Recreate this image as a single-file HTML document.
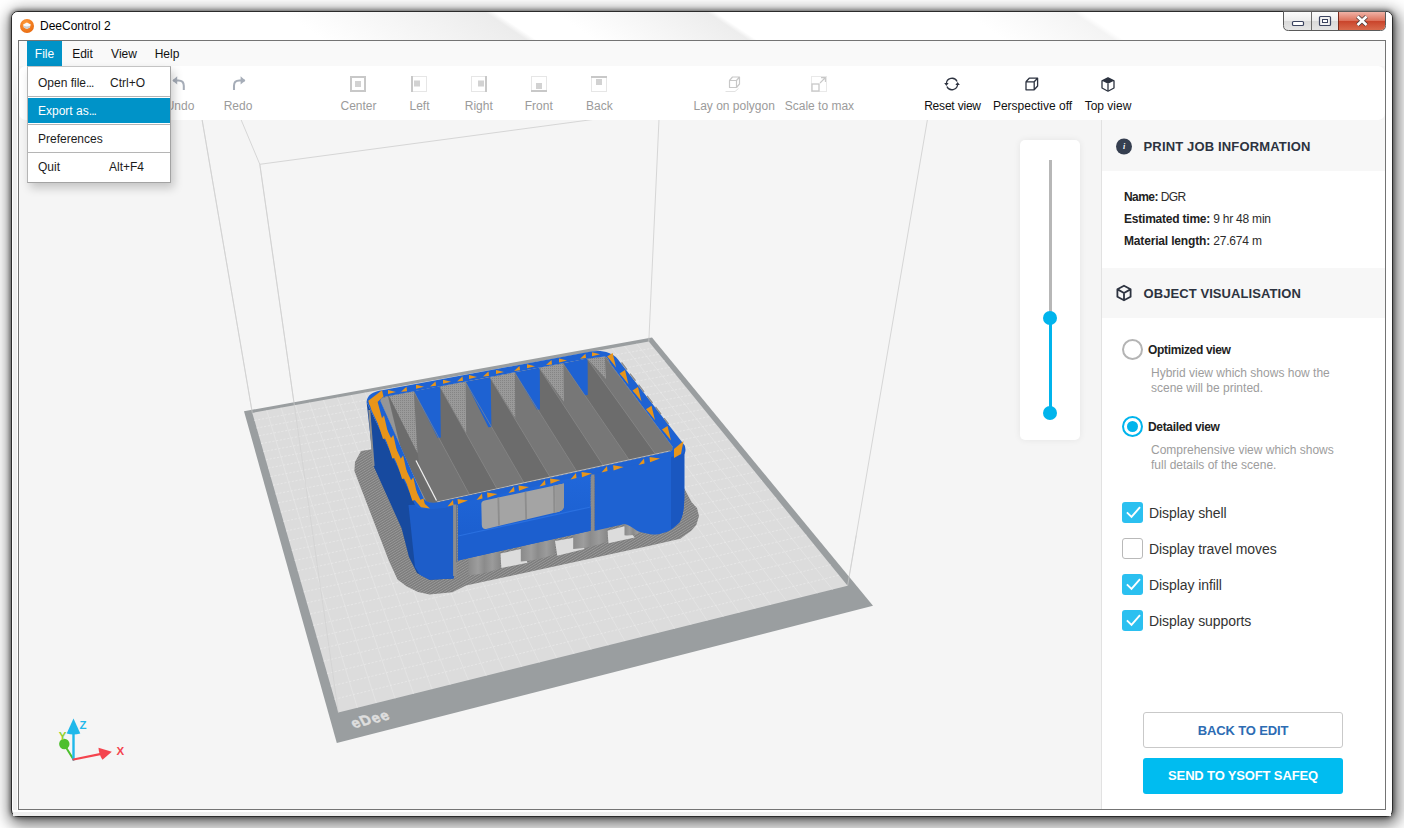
<!DOCTYPE html>
<html lang="en">
<head>
<meta charset="utf-8">
<title>DeeControl 2</title>
<style>
*{box-sizing:border-box;margin:0;padding:0}
html,body{width:1404px;height:828px;overflow:hidden;background:#fff}
body{position:relative;font-family:"Liberation Sans",sans-serif;color:#222;font-size:12px}
.abs{position:absolute}
#win{position:absolute;left:11px;top:11px;width:1382px;height:806px;border:1px solid #2b2b2b;border-radius:7px;background:#fff;
 box-shadow:0 0 0 1px rgba(255,255,255,.6) inset,2px 4px 15px 4px rgba(0,0,0,.55),0 0 4px 1px rgba(0,0,0,.45)}
#glass{position:absolute;left:12px;top:12px;width:1380px;height:28px;border-radius:6px 6px 0 0;
 background:linear-gradient(33.700deg,#fff 0,#fff 21.900%,#ececec 36.200%,#fff 36.900%,#fff 41%,#ededed 51.800%,#fff 52.400%,#fff 69.800%,#f4f4f4 77.500%,#fff 78.200%,#fff 100%)}
#title{position:absolute;left:40px;top:18.500px;font-size:12px;line-height:15px;color:#000;white-space:nowrap}
#client{position:absolute;left:18px;top:40px;width:1368px;height:770px;border:1px solid #747474;background:#f5f5f5;overflow:hidden}
/* everything inside #client uses page coords minus (19,41) via this wrapper */
#page{position:absolute;left:-19px;top:-41px;width:1404px;height:828px}
#menubar{position:absolute;left:19px;top:41px;width:1366px;height:25px;background:#f9f9f9}
.mi{position:absolute;top:41px;height:25px;line-height:26.500px;font-size:12px;color:#111;text-align:center;white-space:nowrap}
#toolbar{position:absolute;left:19px;top:66px;width:1366px;height:54px;background:#fff;border-radius:7px}
.tl{position:absolute;top:99px;height:15px;line-height:15px;font-size:12px;color:#9b9b9b;white-space:nowrap;transform:translateX(-50%)}
.tl.on{color:#111}
.ti{position:absolute;overflow:visible;margin-top:1px}
#drop{position:absolute;left:27px;top:66px;width:144px;height:117px;background:#fff;border:1px solid #a3a3a3;border-top-color:#c4c4c4;border-left-color:#b5b5b5;box-shadow:3px 5px 9px rgba(0,0,0,.2)}
.di{position:absolute;left:0;width:142px;height:26px;line-height:26px;font-size:12px;color:#1c1c1c;white-space:nowrap}
.di span{position:absolute;top:0}
.ds{position:absolute;left:0;width:142px;height:1px;background:#b5b5b5}
#panel{position:absolute;left:1101px;top:120px;width:284px;height:690px;background:#fff;border-left:1px solid #e2e2e2}
.hd{position:absolute;left:1102px;width:283px;background:#f7f7f7}
.hd b{position:absolute;left:41.500px;font-size:13px;line-height:18px;color:#2d3340;white-space:nowrap;letter-spacing:.08px}
.info{position:absolute;left:1124px;font-size:12px;line-height:15px;color:#2c2c2c;white-space:nowrap}
.info b{color:#222}
.rl{position:absolute;left:1148px;letter-spacing:-.34px;font-size:12px;font-weight:bold;line-height:15px;color:#222;white-space:nowrap}
.rd{position:absolute;left:1151px;font-size:12px;line-height:15px;color:#9d9d9d;white-space:nowrap}
.cb{position:absolute;left:1122px;width:21px;height:21px;border-radius:3px;background:#2bc0f0}
.cb.off{background:#fff;border:1px solid #b9b9b9}
.cl{position:absolute;left:1149px;letter-spacing:-.08px;font-size:14px;line-height:18px;color:#333;white-space:nowrap}
.btn{position:absolute;left:1143px;width:200px;height:36px;border-radius:3px;letter-spacing:-.15px;font-size:13px;font-weight:bold;text-align:center;line-height:36px;white-space:nowrap}
</style>
</head>
<body>
<div id="win"></div>
<div id="glass"></div>
<div class="abs" style="left:13px;top:40px;width:4px;height:770px;background:linear-gradient(#fff,#efefef 8%,#efefef 100%)"></div>
<div class="abs" style="left:13px;top:811.500px;width:1378px;height:4px;background:linear-gradient(to right,#efefef 0,#f1f1f1 55%,#fff 78%)"></div>
<!-- title bar -->
<svg class="abs" style="left:19px;top:18px" width="16" height="16" viewBox="0 0 16 16">
 <defs><radialGradient id="og" cx="40%" cy="30%" r="75%"><stop offset="0" stop-color="#ff9a3a"/><stop offset="1" stop-color="#e86a10"/></radialGradient></defs>
 <circle cx="8" cy="8" r="7" fill="url(#og)"/>
 <path d="M4.100 6.600 L7.900 4.600 L11.800 6.600 L10.700 9.600 L7.900 10.900 L4.850 9.600 Z" fill="#fbfaf9"/>
 <path d="M4.500 7.800 L7.900 8.600 L11.400 7.800 L10.700 9.600 L7.900 10.900 L4.850 9.600 Z" fill="#c9cdd2"/>
</svg>
<div id="title">DeeControl 2</div>
<!-- caption buttons -->
<svg class="abs" style="left:1282px;top:11px" width="105" height="21" viewBox="0 0 105 21">
 <defs>
  <linearGradient id="cbg" x1="0" y1="0" x2="0" y2="1"><stop offset="0" stop-color="#fdfdfd"/><stop offset=".5" stop-color="#ececec"/><stop offset=".5" stop-color="#d9d9d9"/><stop offset="1" stop-color="#e6e6e6"/></linearGradient>
  <linearGradient id="crd" x1="0" y1="0" x2="0" y2="1"><stop offset="0" stop-color="#f0b2a6"/><stop offset=".5" stop-color="#dc6f58"/><stop offset=".5" stop-color="#c9432a"/><stop offset="1" stop-color="#d96a4c"/></linearGradient>
 </defs>
 <path d="M1.5 0.5 H103.5 V14.5 Q103.5 19.5 98.5 19.5 H6.5 Q1.5 19.5 1.5 14.5 Z" fill="url(#cbg)" stroke="#5a5a5a" stroke-width="1"/>
 <path d="M56.5 1 H103 V14.5 Q103 19 98.5 19 H56.5 Z" fill="url(#crd)"/>
 <path d="M29.5 1 V19 M56.5 1 V19" stroke="#6b6b6b" stroke-width="1"/>
 <path d="M56.5 1 V19" stroke="#7a2a1c" stroke-width="1"/>
 <rect x="10.5" y="10.5" width="11" height="4" rx="1" fill="#fff" stroke="#3c4460" stroke-width="1.2"/>
 <rect x="37.5" y="5.500" width="11" height="9" rx="1" fill="#f2f2f2" stroke="#3c4460" stroke-width="1.2"/>
 <rect x="40.5" y="8.500" width="5" height="3" fill="#fff" stroke="#3c4460" stroke-width="1"/>
 <path d="M75.5 5.500 L84.500 14 M84.500 5.500 L75.500 14" stroke="#4a3a3a" stroke-width="4.2" stroke-linecap="butt"/>
 <path d="M75.5 5.500 L84.500 14 M84.500 5.500 L75.500 14" stroke="#fff" stroke-width="2.600" stroke-linecap="butt"/>
</svg>

<div id="client"><div id="page">
<div id="viewport" class="abs" style="left:19px;top:119px;width:1082px;height:691px;background:#f5f5f5;overflow:hidden">
<!--SCENE--><svg class="abs" style="left:0;top:0" width="1082" height="691" viewBox="19 119 1082 691">
<path d="M252.3 412.9 L198.7 100.0 M338.4 712.5 L259.8 164.3 M259.8 164.3 L232.8 100.0 M259.8 164.3 L737.7 100.0 M648.8 341.6 L659.9 100.0 M847.6 585.7 L930.8 100.0 " fill="none" stroke="#d6d6d6" stroke-width="1"/>
<polygon points="244.0,411.2 652.0,337.5 873.0,605.8 336.8,743.1" fill="#9a9ea0"/>
<polygon points="252.3,412.9 648.8,341.6 847.6,585.7 338.4,712.5" fill="#dcdcdc"/>
<path d="M266.7 410.3 L357.4 707.8 M281.0 407.7 L376.3 703.1 M295.3 405.2 L395.0 698.4 M309.4 402.6 L413.6 693.8 M323.5 400.1 L432.0 689.2 M337.4 397.6 L450.2 684.6 M351.3 395.1 L468.4 680.1 M365.1 392.6 L486.3 675.7 M378.8 390.1 L504.1 671.2 M392.5 387.7 L521.8 666.8 M406.0 385.3 L539.3 662.5 M419.5 382.8 L556.7 658.1 M432.9 380.4 L574.0 653.8 M446.2 378.0 L591.1 649.6 M459.4 375.7 L608.1 645.3 M472.6 373.3 L624.9 641.1 M485.6 370.9 L641.6 637.0 M498.6 368.6 L658.2 632.9 M511.5 366.3 L674.7 628.8 M524.4 364.0 L691.0 624.7 M537.2 361.7 L707.2 620.7 M549.8 359.4 L723.3 616.7 M562.5 357.1 L739.2 612.7 M575.0 354.9 L755.1 608.7 M587.5 352.6 L770.8 604.8 M599.9 350.4 L786.4 600.9 M612.2 348.2 L801.9 597.1 M624.5 346.0 L817.2 593.3 M636.7 343.8 L832.5 589.5 " fill="none" stroke="#e8e8e8" stroke-width="0.75" stroke-opacity=".85"/>
<path d="M254.4 420.4 L653.9 347.9 M256.6 428.0 L659.1 354.2 M258.9 435.7 L664.4 360.7 M261.1 443.6 L669.7 367.3 M263.4 451.6 L675.2 374.0 M265.8 459.8 L680.7 380.8 M268.2 468.1 L686.3 387.7 M270.6 476.6 L692.0 394.7 M273.1 485.2 L697.8 401.8 M275.6 494.0 L703.8 409.1 M278.2 502.9 L709.8 416.5 M280.8 512.1 L715.9 424.0 M283.5 521.4 L722.1 431.6 M286.2 530.9 L728.5 439.4 M289.0 540.5 L734.9 447.3 M291.8 550.4 L741.5 455.4 M294.7 560.5 L748.2 463.6 M297.7 570.7 L755.0 472.0 M300.7 581.2 L761.9 480.5 M303.7 591.9 L769.0 489.2 M306.9 602.8 L776.2 498.0 M310.1 614.0 L783.5 507.0 M313.4 625.4 L791.0 516.2 M316.7 637.0 L798.6 525.5 M320.1 648.9 L806.4 535.1 M323.6 661.1 L814.3 544.8 M327.2 673.5 L822.4 554.7 M330.8 686.2 L830.6 564.8 M334.6 699.2 L839.0 575.2 " fill="none" stroke="#eaeaea" stroke-width="0.8" stroke-opacity=".9" stroke-dasharray="2.200 1.600"/>
<path d="M338.4 712.5 L259.8 164.3 M252.3 412.9 L202 119 M847.6 585.7 L856.2 535.5 M648.8 341.6 L649 337" fill="none" stroke="#cfcfcf" stroke-width="0.8" opacity=".8"/>
<text transform="translate(354,728.300) rotate(-14.500) skewX(14)" font-family="Liberation Sans,sans-serif" font-weight="bold" font-size="14.500" fill="#dedede" stroke="#dedede" stroke-width=".5" letter-spacing="1">eDee</text>
<defs>
<pattern id="raft" width="2.200" height="2.200" patternUnits="userSpaceOnUse" patternTransform="rotate(-32)"><rect width="2.200" height="2.200" fill="#7b7b7b"/><rect width="2.200" height=".9" fill="#999"/></pattern>
<pattern id="ltx" width="2" height="2" patternUnits="userSpaceOnUse"><rect width="2" height="2" fill="#9a9a9a"/><rect width="1" height="1" fill="#858585"/></pattern>
<linearGradient id="pil" x1="0" y1="0" x2="1" y2="0"><stop offset="0" stop-color="#8a8a8a"/><stop offset=".3" stop-color="#9d9d9d"/><stop offset=".5" stop-color="#8b8b8b"/><stop offset=".75" stop-color="#9b9b9b"/><stop offset="1" stop-color="#888"/></linearGradient>
<linearGradient id="fw" x1="0" y1="0" x2="0" y2="1"><stop offset="0" stop-color="#2067da"/><stop offset="1" stop-color="#1a5ccb"/></linearGradient>
<clipPath id="inr"><path d="M380.400 401 C380.600 398 384 396.800 388.800 396 L587 358.700 L604.800 356.500 C607 357.500 608.500 359 609.900 362.900 L672.400 446.600 C673 449 672 451 669.900 451.600 L438 502.300 C433 503.300 427 503 424 499 Z"/></clipPath>
</defs>
<polygon points="374.0,449.0 361.0,451.0 355.0,462.0 354.4,471.0 360.5,487.0 389.0,561.0 397.5,579.6 406.8,586.6 418.0,592.0 429.6,594.6 452.4,592.3 466.0,585.5 650.7,545.6 680.3,538.7 691.0,531.0 696.3,525.0 699.0,516.0 697.0,508.0 691.7,502.3 684.0,488.0 684.0,470.0 600.0,470.0 420.0,500.0" fill="url(#raft)"/>
<polygon points="500.3,553.6 520.8,549.0 527.6,562.7 501.4,568.0" fill="#dcdcdc"/>
<polygon points="555.0,541.0 575.5,537.6 584.6,549.0 557.3,555.8" fill="#dcdcdc"/>
<polygon points="607.4,530.8 624.5,526.2 634.8,537.6 608.5,543.3" fill="#dcdcdc"/>
<path d="M468.4 555 L500.3 548.0 L500.3 568.0 Q484.4 574.5 468.4 575 Z" fill="url(#pil)"/>
<path d="M520.8 542 L555 534.5 L555 554.0 Q537.9 560.7 520.8 561.5 Z" fill="url(#pil)"/>
<path d="M573.2 532 L607.4 524.5 L607.4 541.5 Q590.3 548.2 573.2 549 Z" fill="url(#pil)"/>
<path d="M624.5 523 L641.6 519.2 L641.6 531.5 Q633.0 536.4 624.5 535.3 Z" fill="url(#pil)"/>
<polygon points="374.5,467.0 377.5,465.5 392.0,505.0 404.0,535.0 414.0,565.0 409.0,557.0 401.6,528.3 394.0,510.0" fill="#7b7b7b"/>
<polygon points="366.6,402.0 370.8,440.0 373.9,466.7 401.6,528.3 409.0,557.0 417.0,573.0 429.6,579.8 453.6,578.6 453.6,503.0 431.0,504.0 412.7,497.0" fill="#174a9f"/>
<path d="M369.300 410 L373.600 466" stroke="#8e8e8e" stroke-width="2" fill="none"/>
<polygon points="408.5,505.0 453.6,503.0 453.6,578.6 429.6,579.8 420.0,575.0 415.0,567.0" fill="#1d5dc9"/>
<g clip-path="url(#inr)">
<rect x="370" y="340" width="320" height="180" fill="#727272"/>
<polygon points="413.8,391.5 439.7,386.5 497.5,489.8 470.1,495.8" fill="#6c6c6c"/>
<polygon points="439.7,386.5 465.6,382.2 524.6,483.8 497.5,489.8" fill="#777"/>
<polygon points="465.6,382.2 490.1,377.8 550.6,478.0 524.6,483.8" fill="#6c6c6c"/>
<polygon points="490.1,377.8 514.9,373.0 577.2,472.1 550.6,478.0" fill="#777"/>
<polygon points="514.9,373.0 539.2,368.0 603.7,466.2 577.2,472.1" fill="#6c6c6c"/>
<polygon points="539.2,368.0 563.4,364.0 629.6,460.5 603.7,466.2" fill="#777"/>
<polygon points="563.4,364.0 587.0,358.7 655.9,454.7 629.6,460.5" fill="#6c6c6c"/>
<polygon points="587.0,358.7 604.8,357.0 675.2,450.4 655.9,454.7" fill="#777"/>
<polygon points="604.8,357.0 609.9,362.9 672.4,446.6 669.9,451.6 675.2,450.4" fill="#7a7a7a"/>
<polygon points="388.8,396.0 413.8,391.5 470.1,495.8 437.0,503.0" fill="#747474"/>
<polygon points="388.8,396.0 417.5,453.0 421.0,475.0 437.0,503.0 428.0,505.0 401.0,450.0" fill="#6c6c6c"/>
<polygon points="375.0,400.0 388.0,396.5 401.0,450.0 428.0,505.0 412.0,505.0" fill="#969696"/>
<polygon points="413.8,391.0 440.3,386.0 440.8,437.6 437.8,437.9" fill="#1e62d2"/>
<polygon points="465.6,381.7 490.7,377.3 491.4,427.0 488.4,427.3" fill="#1e62d2"/>
<polygon points="514.9,372.5 539.8,367.5 540.0,409.4 537.0,409.7" fill="#1e62d2"/>
<polygon points="563.4,363.5 587.6,358.2 587.8,395.0 584.8,395.3" fill="#1e62d2"/>
<polygon points="388.8,395.5 413.8,391.0 417.5,453.0" fill="url(#ltx)"/>
<polygon points="439.7,386.0 465.6,381.7 466.2,433.0" fill="url(#ltx)"/>
<polygon points="490.1,377.3 514.9,372.5 515.2,418.0" fill="url(#ltx)"/>
<polygon points="539.2,367.5 563.4,363.5 563.9,401.8" fill="url(#ltx)"/>
<polygon points="587.0,358.2 604.8,356.5 606.0,379.0" fill="url(#ltx)"/>
<path d="M413.8 391.5 L470.1 495.8 M439.7 386.5 L497.5 489.8 M465.6 382.2 L524.6 483.8 M490.1 377.8 L550.6 478.0 M514.9 373.0 L577.2 472.1 M539.2 368.0 L603.7 466.2 M563.4 364.0 L629.6 460.5 M587.0 358.7 L655.9 454.7 M604.8 357.0 L675.2 450.4 " stroke="#8e8e8e" stroke-width=".6" fill="none"/>
<path d="M416 460.500 L436.500 500.600" stroke="#f2f2f2" stroke-width="1.200"/>
<path d="M437 502 L669.900 451" stroke="#b9b9b9" stroke-width="1.200"/>
</g>
<path d="M366.600 402 C367 395 373 391.500 382 390.200 L591.300 351.600 C601 350 612 352 618 359.500 L684.300 445 C686.500 449 686 455 680 457.500 L448.800 507.200 C440 509 425 510 418 508 C415 506 413.500 502 412.700 499 Z M380.400 401 C380.600 398 384 396.800 388.800 396 L587 358.700 L604.800 356.500 C607 357.500 608.500 359 609.900 362.900 L672.400 446.600 C673 449 672 451 669.900 451.600 L438 502.300 C433 503.300 427 503 424 499 Z" fill="#1e62d2" fill-rule="evenodd"/>
<path d="M621.500 362.500 L668.500 424" stroke="#8d8d8d" stroke-width="1.400" fill="none" stroke-dasharray="9 5"/>
<polygon points="458.0,503.5 590.6,474.0 590.6,530.8 458.0,560.4" fill="url(#fw)"/>
<polygon points="458.0,536.0 590.6,507.0 590.6,530.8 458.0,560.4" fill="#1c5fcf"/>
<path d="M458 536 L590.600 507" stroke="#2a70e0" stroke-width="1.200" fill="none"/>
<path d="M484.500 500.500 L564 483.600 L564 505 Q564 510.500 559 511.800 L487 528.800 Q482 529.800 481.800 525 L481.300 504 Q481.300 501 484.500 500.500 Z" fill="#a4a4a4"/>
<path d="M498.300 497.500 L499 525.500 M525.500 491.800 L526.200 519.500 M553.900 485.800 L554.400 513" stroke="#8d8d8d" stroke-width="1.800" fill="none"/>
<path d="M555 485.500 L564 483.600 L564 505 Q564 510.500 559 511.800 L555.500 512.600 Z" fill="#999"/>
<path d="M454.800 504.500 V576" stroke="#8d8d8d" stroke-width="3.400"/><path d="M456.700 504.500 V562" stroke="#5d6f92" stroke-width="1"/>
<path d="M592.800 474.500 V531" stroke="#8d8d8d" stroke-width="3.200"/><path d="M594.600 474.500 V531" stroke="#5d6f92" stroke-width=".8"/>
<path d="M595 473.500 L672 456.500 L680 455 C685 453 686 450 684.300 445 L684.300 497.800 C684 512 682 518 679.200 522.800 C674 528 670 531 666.700 531.900 C660 534 655 535 650.700 534.200 C645 533.500 641 532.500 637 530.800 C632 527 628 524.500 624.500 524 L595 530.800 Z" fill="#1e62d2"/>
<path d="M671 457 L680 455 C685 453 686 450 684.300 445 L684.300 497.800 C684 512 682 518 679.200 522.800 L671 529 Z" fill="#1a57c0"/>
<polygon points="388.0,390.0 396.0,392.0 388.0,394.0" fill="#e8951a"/>
<polygon points="401.0,391.8 406.5,386.8 407.0,391.2" fill="#e8951a"/>
<polygon points="416.0,384.8 424.0,386.8 416.0,388.8" fill="#e8951a"/>
<polygon points="430.0,386.4 435.5,381.4 436.0,385.8" fill="#e8951a"/>
<polygon points="443.0,379.8 451.0,381.8 443.0,383.8" fill="#e8951a"/>
<polygon points="457.0,381.4 462.5,376.4 463.0,380.8" fill="#e8951a"/>
<polygon points="469.0,375.0 477.0,377.0 469.0,379.0" fill="#e8951a"/>
<polygon points="483.0,376.6 488.5,371.6 489.0,376.0" fill="#e8951a"/>
<polygon points="496.0,370.0 504.0,372.0 496.0,374.0" fill="#e8951a"/>
<polygon points="514.0,370.9 519.5,365.9 520.0,370.3" fill="#e8951a"/>
<polygon points="527.0,364.3 535.0,366.3 527.0,368.3" fill="#e8951a"/>
<polygon points="546.0,365.0 551.5,360.0 552.0,364.4" fill="#e8951a"/>
<polygon points="559.0,358.4 567.0,360.4 559.0,362.4" fill="#e8951a"/>
<polygon points="580.0,358.7 585.5,353.7 586.0,358.1" fill="#e8951a"/>
<polygon points="592.0,352.3 600.0,354.3 592.0,356.3" fill="#e8951a"/>
<polygon points="607.1,356.5 612.6,353.0 616.1,367.5 610.6,360.5" fill="#e8951a"/>
<polygon points="619.5,373.5 625.0,370.0 628.5,384.5 623.0,377.5" fill="#e8951a"/>
<polygon points="632.5,390.5 638.0,387.0 641.5,401.5 636.0,394.5" fill="#e8951a"/>
<polygon points="646.0,409.3 651.5,405.8 655.0,420.3 649.5,413.3" fill="#e8951a"/>
<polygon points="662.0,429.5 667.5,426.0 671.0,440.5 665.5,433.5" fill="#e8951a"/>
<polygon points="674.0,449.0 683.5,441.0 681.0,454.0 674.0,458.0" fill="#e8951a"/>
<polygon points="601.5,472.4 607.0,465.9 607.5,471.1" fill="#e8951a"/>
<polygon points="613.1,465.3 623.6,467.0 613.6,470.6" fill="#e8951a"/>
<polygon points="638.5,464.9 644.0,458.4 644.5,463.6" fill="#e8951a"/>
<polygon points="649.5,456.9 660.0,458.6 650.0,462.2" fill="#e8951a"/>
<polygon points="570.5,479.4 576.0,472.9 576.5,478.1" fill="#e8951a"/>
<polygon points="581.5,471.9 592.0,473.6 582.0,477.2" fill="#e8951a"/>
<polygon points="539.5,486.4 545.0,479.9 545.5,485.1" fill="#e8951a"/>
<polygon points="550.0,478.4 560.5,480.1 550.5,483.7" fill="#e8951a"/>
<polygon points="508.5,492.9 514.0,486.4 514.5,491.6" fill="#e8951a"/>
<polygon points="518.5,485.4 529.0,487.1 519.0,490.7" fill="#e8951a"/>
<polygon points="476.5,499.9 482.0,493.4 482.5,498.6" fill="#e8951a"/>
<polygon points="487.0,492.4 497.5,494.1 487.5,497.7" fill="#e8951a"/>
<polygon points="447.5,506.4 453.0,499.9 453.5,505.1" fill="#e8951a"/>
<polygon points="457.5,498.9 468.0,500.6 458.0,504.2" fill="#e8951a"/>
<polygon points="382.0,390.3 368.3,400.8 369.5,405.0 377.5,402.0 383.5,396.5" fill="#e8951a"/>
<polygon points="384.0,415.5 389.0,437.5 383.0,439.0 378.0,423.5" fill="#e8951a"/>
<polygon points="393.3,435.0 398.3,457.0 392.3,458.5 387.3,443.0" fill="#e8951a"/>
<polygon points="403.1,455.6 408.1,477.6 402.1,479.1 397.1,463.6" fill="#e8951a"/>
<polygon points="413.3,477.2 418.3,499.2 412.3,500.7 407.3,485.2" fill="#e8951a"/>
<polygon points="423.5,498.5 425.1,505.5 422.5,507.0 417.5,501.0" fill="#e8951a"/>
<polygon points="369.5,404.0 377.5,401.5 382.5,420.0 396.7,450.0 411.0,480.0 420.5,500.0 430.0,508.5 421.0,507.3 414.7,500.0 399.9,470.0 385.7,440.0 371.4,410.0" fill="#e8951a"/>
<path d="M372 404 L414 496" stroke="#1e62d2" stroke-width="0" fill="none"/>
<g stroke-linecap="round"><path d="M73.500 759.500 L64.500 745" stroke="#4dbf2e" stroke-width="2"/><circle cx="64.300" cy="744" r="5.200" fill="#4dbf2e"/><path d="M73.500 759.500 V732" stroke="#1fb8ea" stroke-width="2.400"/><path d="M73.500 718.500 L80.300 733.500 Q73.500 735.500 66.700 733.500 Z" fill="#1fb8ea"/><path d="M73.500 759.500 L100 754.200" stroke="#f4444e" stroke-width="2.200"/><path d="M111.800 751.700 L98.500 747.800 Q98.800 754.500 102.500 759.800 Z" fill="#f4444e"/></g>
<text x="79.500" y="729" font-family="Liberation Sans,sans-serif" font-weight="bold" font-size="11.500" fill="#1fb8ea">Z</text>
<text x="58.800" y="740" font-family="Liberation Sans,sans-serif" font-weight="bold" font-size="11.500" fill="#8fd02e">Y</text>
<text x="116.500" y="755.300" font-family="Liberation Sans,sans-serif" font-weight="bold" font-size="11.500" fill="#f4444e">X</text>
</svg><!--/SCENE-->
</div>

<div id="menubar"></div>
<div class="mi" style="left:27px;width:35px;background:#0093c8;color:#fff">File</div>
<div class="mi" style="left:66px;width:33px">Edit</div>
<div class="mi" style="left:105px;width:38px">View</div>
<div class="mi" style="left:149px;width:36px">Help</div>

<div id="toolbar"></div>
<svg class="ti" style="left:169.800px;top:74px" width="16.800" height="16.800" viewBox="0 0 14 14"><path d="M2.500 4.500 H7 Q11.500 4.500 11.500 9 V12.500" fill="none" stroke="#a6adb8" stroke-width="1.700"/><path d="M6 1 L2 4.500 L6 8 Z" fill="#a6adb8"/></svg>
<div class="tl" style="left:180px">Undo</div>
<svg class="ti" style="left:231px;top:74.300px" width="16.800" height="16.800" viewBox="0 0 14 14"><path d="M11.500 4.500 H7 Q2.500 4.500 2.500 9 V12.500" fill="none" stroke="#a6adb8" stroke-width="1.700"/><path d="M8 1 L12 4.500 L8 8 Z" fill="#a6adb8"/></svg>
<div class="tl" style="left:238px">Redo</div>
<svg class="ti" style="left:350.0px;top:75.0px" width="16" height="16" viewBox="0 0 16 16"><rect x="1" y="1" width="14" height="14" fill="none" stroke="#c8c8c8" stroke-width="2"/><rect x="5" y="5" width="6" height="6" fill="#d2d2d2"/></svg>
<div class="tl" style="left:358.5px">Center</div>
<svg class="ti" style="left:411.0px;top:75.0px" width="16" height="16" viewBox="0 0 16 16"><rect x="0.500" y="0.500" width="15" height="15" fill="none" stroke="#e6e6e6" stroke-width="1"/><rect x="0" y="0" width="2" height="16" fill="#c8c8c8"/><rect x="3" y="4.5" width="6" height="6" fill="#d2d2d2"/></svg>
<div class="tl" style="left:419.5px">Left</div>
<svg class="ti" style="left:471.0px;top:75.0px" width="16" height="16" viewBox="0 0 16 16"><rect x="0.500" y="0.500" width="15" height="15" fill="none" stroke="#e6e6e6" stroke-width="1"/><rect x="14" y="0" width="2" height="16" fill="#c8c8c8"/><rect x="7" y="4.5" width="6" height="6" fill="#d2d2d2"/></svg>
<div class="tl" style="left:478.8px">Right</div>
<svg class="ti" style="left:531.0px;top:75.0px" width="16" height="16" viewBox="0 0 16 16"><rect x="0.500" y="0.500" width="15" height="15" fill="none" stroke="#e6e6e6" stroke-width="1"/><rect x="0" y="14" width="16" height="2" fill="#c8c8c8"/><rect x="5" y="7" width="6" height="6" fill="#d2d2d2"/></svg>
<div class="tl" style="left:538.8px">Front</div>
<svg class="ti" style="left:591.0px;top:75.0px" width="16" height="16" viewBox="0 0 16 16"><rect x="0.500" y="0.500" width="15" height="15" fill="none" stroke="#e6e6e6" stroke-width="1"/><rect x="0" y="0" width="16" height="2" fill="#c8c8c8"/><rect x="5" y="3" width="6" height="6" fill="#d2d2d2"/></svg>
<div class="tl" style="left:599.4px">Back</div>
<svg class="ti" style="left:725.0px;top:75.0px" width="18" height="16" viewBox="0 0 18 16"><path d="M4.500 4.500 H11.500 V11.500 H4.500 Z M4.500 4.500 L7.500 1 H14.500 L11.500 4.500 M14.500 1 V8 L11.500 11.500" fill="none" stroke="#c8c8c8" stroke-width="1.200" stroke-linejoin="round"/><path d="M0.500 15.500 H10 L13.500 12.500" fill="none" stroke="#e2e2e2" stroke-width="1"/></svg>
<div class="tl" style="left:734.2px">Lay on polygon</div>
<svg class="ti" style="left:811.0px;top:75.0px" width="16" height="16" viewBox="0 0 16 16"><rect x="0.500" y="0.500" width="15" height="15" fill="none" stroke="#e9e9e9" stroke-width="1"/><rect x="1" y="8" width="7" height="7" fill="none" stroke="#c8c8c8" stroke-width="1.300"/><path d="M9 7 L14 2 M10 1.600 H14.400 V6" fill="none" stroke="#c8c8c8" stroke-width="1.100"/></svg>
<div class="tl" style="left:819.4px">Scale to max</div>
<svg class="ti" style="left:944.0px;top:76.0px" width="16" height="14" viewBox="0 0 16 14"><path d="M2.400 7 A5.600 5.600 0 0 1 13.100 4.600" fill="none" stroke="#2d3340" stroke-width="1.250"/><path d="M13.600 7 A5.600 5.600 0 0 1 2.900 9.400" fill="none" stroke="#2d3340" stroke-width="1.250"/><path d="M0.200 6 H4.600 L2.400 8.900 Z" fill="#2d3340"/><path d="M11.400 8 H15.800 L13.600 5.100 Z" fill="#2d3340"/></svg>
<div class="tl on" style="left:952.500px;letter-spacing:-.2px">Reset view</div>
<svg class="ti" style="left:1024.0px;top:76.0px" width="16" height="14" viewBox="0 0 16 14"><path d="M2 4.800 H10.200 V12.800 H2 Z M2 4.800 L5.200 1.200 H13.600 L10.200 4.800 M13.600 1.200 V9 L10.200 12.800" fill="none" stroke="#2d3340" stroke-width="1.300" stroke-linejoin="round"/></svg>
<div class="tl on" style="left:1032.5px">Perspective off</div>
<svg class="ti" style="left:1101.0px;top:75.5px" width="14" height="15" viewBox="0 0 14 15"><path d="M7 0.800 L13 3.800 V11 L7 14.200 L1 11 V3.800 Z" fill="#fff" stroke="#2d3340" stroke-width="1.300" stroke-linejoin="round"/><path d="M7 0.800 L13 3.800 L7 6.800 L1 3.800 Z" fill="#2d3340"/><path d="M7 6.800 V14" stroke="#2d3340" stroke-width="1.300"/></svg>
<div class="tl on" style="left:1108px">Top view</div>


<!-- slider -->
<div class="abs" style="left:1020px;top:140px;width:60px;height:300px;background:#fff;border-radius:5px;box-shadow:0 0 7px rgba(0,0,0,.07)"></div>
<div class="abs" style="left:1049px;top:160px;width:3px;height:158px;background:#b7b7b7"></div>
<div class="abs" style="left:1049px;top:318px;width:3px;height:95px;background:#00b4ec"></div>
<div class="abs" style="left:1043px;top:311px;width:14px;height:14px;border-radius:50%;background:#00b4ec"></div>
<div class="abs" style="left:1043px;top:406px;width:14px;height:14px;border-radius:50%;background:#00b4ec"></div>

<div id="panel"></div>
<div class="hd" style="top:120px;height:51px"><b style="top:17.500px;letter-spacing:.16px">PRINT JOB INFORMATION</b></div>
<svg class="abs" style="left:1115px;top:137.500px" width="18" height="18" viewBox="0 0 18 18"><circle cx="9" cy="8.500" r="8" fill="#363f50"/><text x="9" y="11.300" text-anchor="middle" font-family="Liberation Serif,serif" font-style="italic" font-weight="bold" font-size="8" fill="#fff">i</text></svg>
<div class="info" style="top:190px;letter-spacing:-.55px"><b>Name:</b> DGR</div>
<div class="info" style="top:212px;letter-spacing:-.22px"><b>Estimated time:</b> 9 hr 48 min</div>
<div class="info" style="top:234px;letter-spacing:-.17px"><b>Material length:</b> 27.674 m</div>
<div class="hd" style="top:268px;height:50px"><b style="top:16.500px">OBJECT VISUALISATION</b></div>
<svg class="abs" style="left:1115px;top:284px" width="18" height="18" viewBox="0 0 18 18"><path d="M9 1.700 L15.600 5.300 V12.700 L9 16.300 L2.400 12.700 V5.300 Z M2.600 5.400 L9 9 L15.400 5.400 M9 9 V16" fill="none" stroke="#2d3340" stroke-width="1.800" stroke-linejoin="round"/></svg>

<div class="abs" style="left:1121.500px;top:338.500px;width:21px;height:21px;border-radius:50%;border:2px solid #b4b4b4;background:#fff"></div>
<div class="rl" style="top:343px">Optimized view</div>
<div class="rd" style="top:366px">Hybrid view which shows how the</div>
<div class="rd" style="top:381px">scene will be printed.</div>
<div class="abs" style="left:1121.500px;top:415.500px;width:21px;height:21px;border-radius:50%;border:2px solid #00b4ec;background:#fff"></div>
<div class="abs" style="left:1126.500px;top:420.500px;width:11px;height:11px;border-radius:50%;background:#00b4ec"></div>
<div class="rl" style="top:420px">Detailed view</div>
<div class="rd" style="top:443px">Comprehensive view which shows</div>
<div class="rd" style="top:458px">full details of the scene.</div>
<div class="cb" style="top:502px"><svg width="21" height="21" viewBox="0 0 21 21"><path d="M4.900 10.400 L9.500 14.900 L18 5.200" fill="none" stroke="#fff" stroke-width="1.900"/></svg></div><div class="cl" style="top:504px">Display shell</div>
<div class="cb off" style="top:538px"></div><div class="cl" style="top:540px">Display travel moves</div>
<div class="cb" style="top:574px"><svg width="21" height="21" viewBox="0 0 21 21"><path d="M4.900 10.400 L9.500 14.900 L18 5.200" fill="none" stroke="#fff" stroke-width="1.900"/></svg></div><div class="cl" style="top:576px">Display infill</div>
<div class="cb" style="top:610px"><svg width="21" height="21" viewBox="0 0 21 21"><path d="M4.900 10.400 L9.500 14.900 L18 5.200" fill="none" stroke="#fff" stroke-width="1.900"/></svg></div><div class="cl" style="top:612px">Display supports</div>
<div class="btn" style="top:712px;border:1px solid #c9c9c9;background:#fff;color:#2d6cb3">BACK TO EDIT</div>
<div class="btn" style="top:758px;height:36px;line-height:36px;background:#00bcf0;color:#fff">SEND TO YSOFT SAFEQ</div>


<div id="drop">
<div class="di" style="top:3px"><span style="left:10px">Open file<i style="font-style:normal;letter-spacing:-.9px">...</i></span><span style="left:82px">Ctrl+O</span></div>
<div class="ds" style="top:29px"></div>
<div class="di" style="top:31px;height:25px;line-height:27px;background:#0093c8;color:#fff"><span style="left:10px">Export as<i style="font-style:normal;letter-spacing:-.9px">...</i></span></div>
<div class="ds" style="top:57px"></div>
<div class="di" style="top:59px"><span style="left:10px">Preferences</span></div>
<div class="ds" style="top:85px"></div>
<div class="di" style="top:87px"><span style="left:10px">Quit</span><span style="left:81px">Alt+F4</span></div>
</div>

</div></div>
</body>
</html>
